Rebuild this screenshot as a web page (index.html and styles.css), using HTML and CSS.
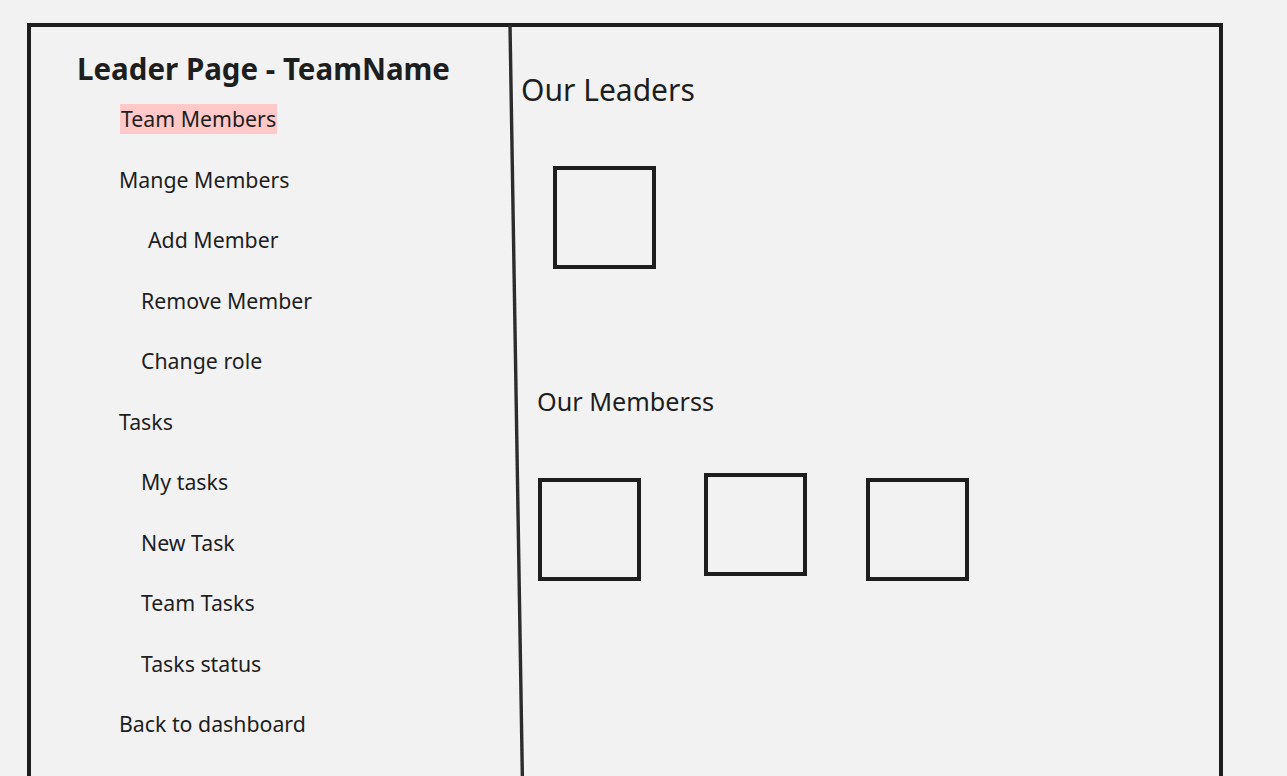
FILE: index.html
```html
<!DOCTYPE html>
<html lang="en">
<head>
<meta charset="utf-8">
<title>Leader Page - TeamName</title>
<link rel="stylesheet" href="styles.css">
</head>
<body>
<div class="frame">
  <aside class="sidebar">
    <h1 class="title">Leader Page - TeamName</h1>
    <ul class="menu">
      <li class="item"><span class="active">Team Members</span></li>
      <li class="item">Mange Members</li>
      <li class="item sub sub-add">Add Member</li>
      <li class="item sub">Remove Member</li>
      <li class="item sub">Change role</li>
      <li class="item">Tasks</li>
      <li class="item sub">My tasks</li>
      <li class="item sub">New Task</li>
      <li class="item sub">Team Tasks</li>
      <li class="item sub">Tasks status</li>
      <li class="item">Back to dashboard</li>
    </ul>
  </aside>
  <main class="content">
    <h2 class="leaders-title">Our Leaders</h2>
    <div class="card leader-card"></div>
    <h2 class="members-title">Our Memberss</h2>
    <div class="members-row">
      <div class="card card-a"></div>
      <div class="card card-b"></div>
      <div class="card card-c"></div>
    </div>
  </main>
  <svg class="divider" width="40" height="800" viewBox="0 0 40 800">
    <line x1="6" y1="0" x2="18.5" y2="760" stroke="#2c2c2c" stroke-width="3.4" stroke-linecap="butt"/>
  </svg>
</div>
</body>
</html>
```
FILE: styles.css
```css
html, body {
  margin: 0;
  padding: 0;
  height: 100%;
  overflow: hidden;
  background: #f2f2f2;
}

body {
  font-family: "Noto Sans", "Open Sans", "DejaVu Sans", sans-serif;
  color: #1e1e1e;
}

.frame {
  position: relative;
  box-sizing: border-box;
  margin: 23px 0 0 27px;
  width: 1196px;
  height: 820px;
  border: 4px solid #1e1e1e;
  border-bottom: none;
  display: flex;
}

.sidebar {
  width: 481px;
  flex: none;
  padding-top: 24px;
  box-sizing: border-box;
}

.title {
  margin: 0 0 0 46px;
  font-size: 29.5px;
  line-height: 36px;
  font-weight: 700;
  white-space: nowrap;
}

.menu {
  list-style: none;
  margin: 17px 0 0 0;
  padding: 0;
  display: flex;
  flex-direction: column;
  gap: 30.5px;
}

.item {
  font-size: 21.3px;
  line-height: 30px;
  height: 30px;
  margin-left: 88px;
  white-space: nowrap;
}

.item.sub {
  margin-left: 110px;
}

.item.sub-add {
  margin-left: 117px;
}

.active {
  display: inline-block;
  background: #ffc9c9;
  padding: 0 1px;
  margin-left: 1px;
}

.content {
  flex: 1;
  padding-top: 43px;
  display: flex;
  flex-direction: column;
  align-items: flex-start;
}

.leaders-title {
  margin: 0 0 0 9px;
  font-size: 30px;
  line-height: 40px;
  font-weight: 400;
}

.card {
  box-sizing: border-box;
  width: 103px;
  height: 103px;
  border: 4px solid #1e1e1e;
  flex: none;
}

.leader-card {
  margin: 56px 0 0 41px;
}

.members-title {
  margin: 115px 0 0 25px;
  font-size: 25.2px;
  line-height: 34px;
  font-weight: 400;
}

.members-row {
  display: flex;
  align-items: flex-start;
  margin: 55px 0 0 26px;
}

.card-a {
  margin-top: 5px;
}

.card-b {
  margin-left: 63px;
}

.card-c {
  margin-left: 59px;
  margin-top: 5px;
}

.divider {
  position: absolute;
  left: 473px;
  top: -2px;
}
```
